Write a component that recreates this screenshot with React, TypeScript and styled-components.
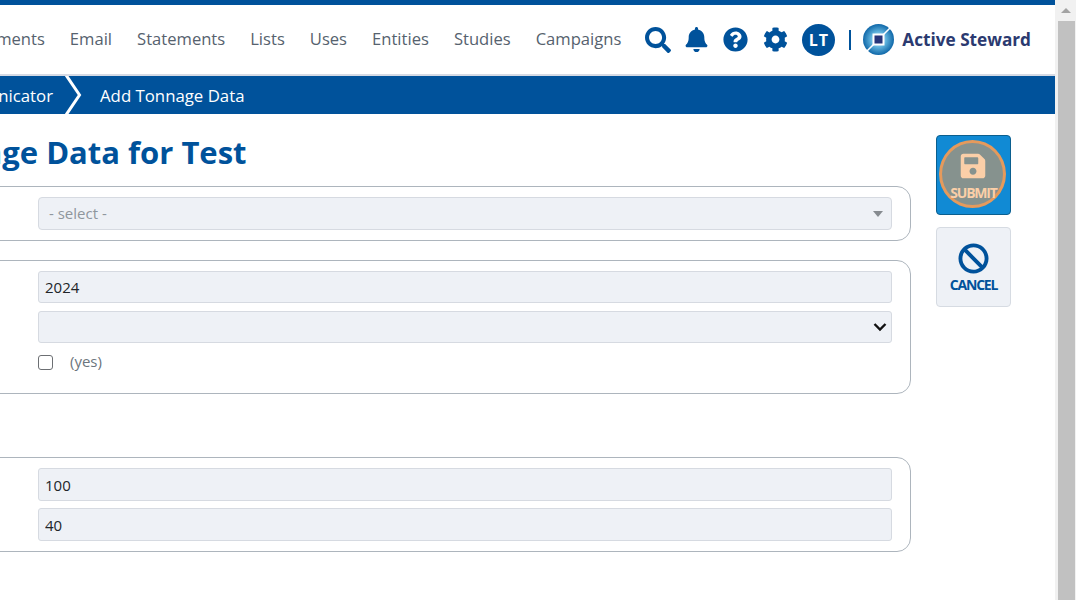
import React from "react";
import styled, { createGlobalStyle } from "styled-components";
import { FaSearch, FaBell, FaQuestionCircle, FaCog, FaSave, FaBan } from "react-icons/fa";

const Global = createGlobalStyle`
  html, body { margin: 0; padding: 0; height: 100%; overflow: hidden; background: #fff; }
  #root { height: 100%; }
  * { box-sizing: border-box; }
`;

const Shell = styled.div`
  display: flex;
  width: 1076px;
  height: 600px;
  overflow: hidden;
  font-family: "Open Sans", "Noto Sans", sans-serif;
`;
const Viewport = styled.div`
  width: 1055px;
  flex: none;
  overflow: hidden;
`;
const Canvas = styled.div`
  width: 1255px;
  margin-left: -200px;
`;
const Header = styled.header`
  height: 76px;
  border-top: 5px solid #00529b;
  border-bottom: 2px solid #d6dae4;
  padding-right: 24px;
  display: flex;
  align-items: center;
  justify-content: flex-end;
`;
const Nav = styled.nav`
  display: flex;
  gap: 25px;
  margin-right: 24px;
  margin-bottom: 2px;
`;
const NavLink = styled.a`
  font-size: 16.6px;
  line-height: 22px;
  color: #56626e;
`;
const IconGroup = styled.div`
  display: flex;
  align-items: center;
  color: #00529b;
`;
const IconSlot = styled.span<{ $w: number; $gap: number }>`
  width: ${(p) => p.$w}px;
  margin-right: ${(p) => p.$gap}px;
  display: flex;
  justify-content: center;
  align-items: center;
`;
const Avatar = styled.span`
  width: 33px;
  height: 32px;
  border-radius: 50%;
  background: #00529b;
  color: #fff;
  font-size: 16px;
  font-weight: 700;
  letter-spacing: 1px;
  display: flex;
  align-items: center;
  justify-content: center;
  margin-right: 14px;
`;
const Divider = styled.span`
  width: 2px;
  height: 20px;
  background: #00529b;
  margin-right: 12px;
`;
const Brand = styled.span`
  font-size: 17.2px;
  font-weight: 700;
  color: #2b3a70;
  margin-left: 8px;
  white-space: nowrap;
`;
const Crumbs = styled.div`
  height: 38px;
  background: #00529b;
  display: flex;
  align-items: center;
  justify-content: flex-end;
  color: #fff;
  font-size: 16.8px;
  font-weight: 500;
  white-space: nowrap;
`;
const Crumb = styled.span`
  margin-right: 12px;
`;
const ChevronBox = styled.span`
  display: flex;
  margin-right: 18px;
`;
const CurrentCrumb = styled.span`
  flex: 0 0 955px;
`;
const Main = styled.main`
  display: grid;
  grid-template-columns: 1111px 75px;
  column-gap: 25px;
  padding-top: 21px;
`;
const FormColumn = styled.div`
  min-width: 0;
`;
const Title = styled.h1`
  margin: 0 0 17px 37px;
  font-size: 31px;
  line-height: 34px;
  font-weight: 700;
  color: #00529b;
  white-space: nowrap;
`;
const Panel = styled.section<{ $top?: number }>`
  border: 1px solid #adb5bd;
  border-radius: 14px;
  padding: 10px 18px 10px 237px;
  margin-top: ${(p) => p.$top ?? 0}px;
  display: flex;
  flex-direction: column;
`;
const fieldBase = `
  width: 100%;
  background-color: #eef1f6;
  border: 1px solid #d6dae1;
  border-radius: 3px;
  font-family: "Open Sans", "Noto Sans", sans-serif;
  font-size: 15px;
  color: #212529;
`;
const TextField = styled.input<{ $h: number; $gap?: number }>`
  ${fieldBase}
  height: ${(p) => p.$h}px;
  margin-top: ${(p) => p.$gap ?? 0}px;
  padding: 0 6px;
  outline: none;
`;
const NativeSelect = styled.select`
  ${fieldBase}
  height: 32px;
  margin-top: 8px;
  padding: 0 6px;
  outline: none;
  appearance: none;
  background-image: url("data:image/svg+xml,%3Csvg xmlns='http://www.w3.org/2000/svg' width='14' height='10' viewBox='0 0 14 10'%3E%3Cpath d='M1.5 2 L7 7.5 L12.5 2' fill='none' stroke='%23111' stroke-width='2.4'/%3E%3C/svg%3E");
  background-repeat: no-repeat;
  background-position: right 4px center;
`;
const Picker = styled.div`
  ${fieldBase}
  height: 33px;
  padding: 0 8px 2px 10px;
  border-radius: 4px;
  display: flex;
  align-items: center;
  justify-content: space-between;
  color: #8f969d;
`;
const Caret = styled.span`
  width: 0;
  height: 0;
  margin-top: 2px;
  border-left: 5px solid transparent;
  border-right: 5px solid transparent;
  border-top: 6px solid #868b90;
`;
const CheckRow = styled.label`
  display: flex;
  align-items: center;
  height: 22px;
  margin-top: 8px;
  margin-bottom: 10px;
  font-size: 15px;
  line-height: 20px;
  color: #6c757d;
`;
const Check = styled.span`
  width: 15px;
  height: 15px;
  border: 1px solid #6c6f73;
  border-radius: 3px;
  background: #fff;
  margin-right: 17px;
`;
const YesText = styled.span`
  margin-bottom: 2px;
`;
const Actions = styled.aside`
  display: flex;
  flex-direction: column;
  gap: 12px;
`;
const ActionButton = styled.button<{ $primary?: boolean }>`
  position: relative;
  width: 75px;
  height: 80px;
  padding: 0;
  border-radius: 4px;
  border: 1px solid ${(p) => (p.$primary ? "#0b5f8f" : "#d6dbe2")};
  background: ${(p) => (p.$primary ? "#118ad4" : "#eef1f6")};
  color: ${(p) => (p.$primary ? "#fbcfa8" : "#00529b")};
  display: flex;
  flex-direction: column;
  align-items: center;
  justify-content: center;
  font-family: inherit;
  font-size: 14px;
  font-weight: 700;
  letter-spacing: -1.2px;
`;
const Ring = styled.span`
  position: absolute;
  left: 2px;
  top: 4px;
  width: 67px;
  height: 68px;
  border-radius: 50%;
  background: #86928e;
  border: 3px solid #e59a5c;
`;
const ButtonInner = styled.span<{ $gap: number; $down: number }>`
  position: relative;
  display: flex;
  flex-direction: column;
  align-items: center;
  gap: ${(p) => p.$gap}px;
  margin-top: ${(p) => p.$down}px;
  line-height: 16px;
`;
const Track = styled.div`
  width: 21px;
  flex: none;
  background: #f1f1f1;
  display: flex;
  flex-direction: column;
  align-items: center;
  padding-left: 1px;
`;
const ArrowBox = styled.div`
  height: 21px;
  display: flex;
  align-items: center;
  justify-content: center;
`;
const Arrow = styled.span`
  width: 0;
  height: 0;
  border-left: 5px solid transparent;
  border-right: 5px solid transparent;
  border-bottom: 5px solid #a3a3a3;
`;
const Thumb = styled.div`
  width: 17px;
  flex: 1;
  background: #c1c1c1;
`;

const navItems = ["Documents", "Email", "Statements", "Lists", "Uses", "Entities", "Studies", "Campaigns"];

const Logo = () => (
  <svg width="31" height="31" viewBox="0 0 31 31">
    <defs>
      <radialGradient id="lg" cx="50%" cy="50%" r="55%">
        <stop offset="0%" stopColor="#e8f4fb" />
        <stop offset="45%" stopColor="#5fb2dc" />
        <stop offset="100%" stopColor="#00599f" />
      </radialGradient>
    </defs>
    <circle cx="15.5" cy="15.5" r="15.5" fill="url(#lg)" />
    <path d="M27 4 L4 27" stroke="#fff" strokeWidth="1.6" />
    <rect x="9.5" y="9.5" width="12" height="12" fill="#fff" />
    <rect x="11.5" y="11.5" width="8" height="8" fill="#27357a" />
  </svg>
);

const Chevron = () => (
  <svg width="17" height="38" viewBox="0 0 17 38">
    <path d="M1 -1 L14.5 19 L1 39" fill="none" stroke="#fff" strokeWidth="3" />
  </svg>
);

export default function App() {
  return (
    <Shell>
      <Global />
      <Viewport>
        <Canvas>
          <Header>
            <Nav>
              {navItems.map((n) => (
                <NavLink key={n}>{n}</NavLink>
              ))}
            </Nav>
            <IconGroup>
              <IconSlot $w={26} $gap={14}><FaSearch size={26} /></IconSlot>
              <IconSlot $w={23} $gap={15}><FaBell size={25} /></IconSlot>
              <IconSlot $w={25} $gap={15}><FaQuestionCircle size={25} /></IconSlot>
              <IconSlot $w={25} $gap={14}><FaCog size={25} /></IconSlot>
              <Avatar>LT</Avatar>
              <Divider />
              <Logo />
              <Brand>Active Steward</Brand>
            </IconGroup>
          </Header>
          <Crumbs>
            <Crumb>Communicator</Crumb>
            <ChevronBox><Chevron /></ChevronBox>
            <CurrentCrumb>Add Tonnage Data</CurrentCrumb>
          </Crumbs>
          <Main>
            <FormColumn>
              <Title>Add Tonnage Data for Test</Title>
              <Panel>
                <Picker>
                  - select -
                  <Caret />
                </Picker>
              </Panel>
              <Panel $top={19}>
                <TextField $h={32} readOnly value="2024" />
                <NativeSelect defaultValue="">
                  <option value=""></option>
                </NativeSelect>
                <CheckRow>
                  <Check />
                  <YesText>(yes)</YesText>
                </CheckRow>
              </Panel>
              <Panel $top={63}>
                <TextField $h={33} readOnly value="100" />
                <TextField $h={33} $gap={7} readOnly value="40" />
              </Panel>
            </FormColumn>
            <Actions>
              <ActionButton $primary>
                <Ring />
                <ButtonInner $gap={5} $down={2}>
                  <FaSave size={28} />
                  SUBMIT
                </ButtonInner>
              </ActionButton>
              <ActionButton>
                <ButtonInner $gap={3} $down={1}>
                  <FaBan size={31} />
                  CANCEL
                </ButtonInner>
              </ActionButton>
            </Actions>
          </Main>
        </Canvas>
      </Viewport>
      <Track>
        <ArrowBox><Arrow /></ArrowBox>
        <Thumb />
      </Track>
    </Shell>
  );
}
